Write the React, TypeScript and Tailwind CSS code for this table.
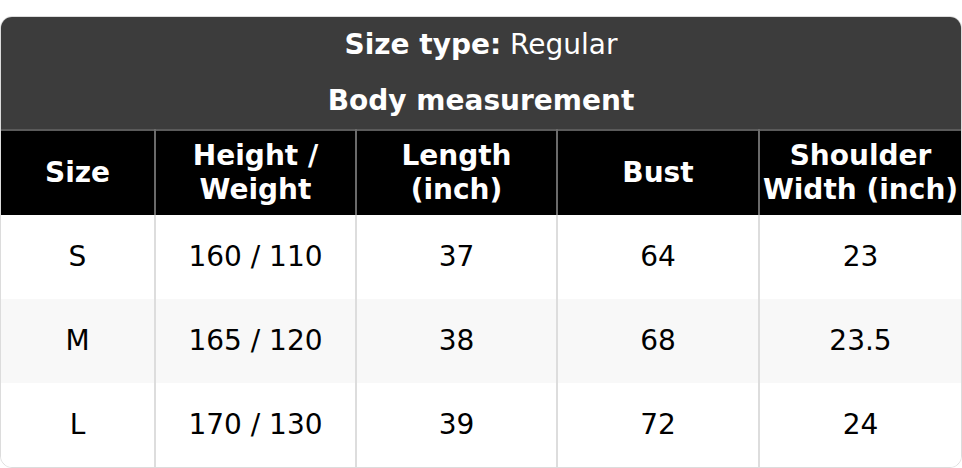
const rows = [
  { size: "S", hw: "160 / 110", length: "37", bust: "64", shoulder: "23" },
  { size: "M", hw: "165 / 120", length: "38", bust: "68", shoulder: "23.5" },
  { size: "L", hw: "170 / 130", length: "39", bust: "72", shoulder: "24" },
];

const heads = ["Size", "Height / Weight", "Length (inch)", "Bust", "Shoulder Width (inch)"];

export default function App() {
  return (
    <div className="min-h-screen bg-white pt-4 font-['DejaVu_Sans',sans-serif] text-[28px] leading-[1.2]">
      <div className="overflow-hidden rounded-xl border border-[#dcdcdc] bg-white">
        <div className="bg-[#3c3c3c] text-center text-white">
          <div className="flex h-14 items-center justify-center">
            <span>
              <b className="font-bold">Size type:</b> Regular
            </span>
          </div>
          <div className="flex h-14 items-center justify-center font-bold">Body measurement</div>
        </div>
        <table className="w-full table-fixed border-collapse text-center">
          <colgroup>
            <col className="w-[154px]" />
            <col className="w-[201px]" />
            <col className="w-[201px]" />
            <col className="w-[202px]" />
            <col />
          </colgroup>
          <thead>
            <tr className="h-[85px] border-t-2 border-[#5a5a5a] bg-black text-white">
              {heads.map((h, i) => (
                <th
                  key={h}
                  className={"font-bold " + (i > 0 ? "border-l-2 border-[#6a6a6a]" : "")}
                >
                  {h}
                </th>
              ))}
            </tr>
          </thead>
          <tbody className="text-black">
            {rows.map((r, idx) => (
              <tr key={r.size} className={"h-[84px] " + (idx === 1 ? "bg-[#f8f8f8]" : "bg-white")}>
                {[r.size, r.hw, r.length, r.bust, r.shoulder].map((v, i) => (
                  <td key={i} className={i > 0 ? "border-l-2 border-[#dddddd]" : ""}>
                    {v}
                  </td>
                ))}
              </tr>
            ))}
          </tbody>
        </table>
      </div>
    </div>
  );
}
